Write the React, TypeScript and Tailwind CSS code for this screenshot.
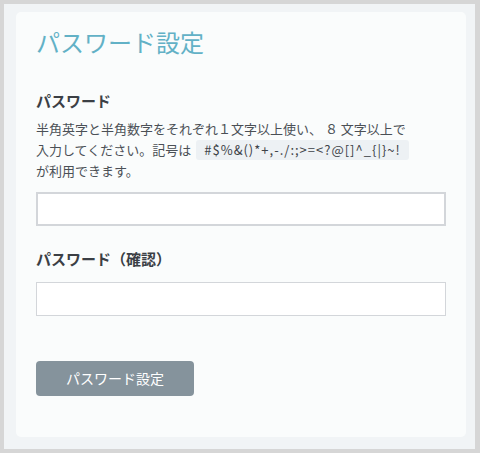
import React from "react";

export default function App() {
  return (
    <div
      className="w-[480px] h-[453px] bg-[#d6d6d6] pl-[4px] pt-[4px] pr-[5px] pb-[4px]"
      style={{ fontFamily: '"Noto Sans CJK JP", "Noto Sans", sans-serif' }}
    >
      <div className="h-full bg-[#f1f4f6] pl-[12px] pt-[8px] pr-[9px] pb-[12px]">
        <div className="h-full rounded-[5px] bg-[#fafcfc] px-[20px] pt-[12px]">
          <h1 className="text-[24px] leading-[36px] text-[#62b1c6] font-normal">パスワード設定</h1>

          <div className="mt-[30px] text-[15px] leading-[22px] font-bold text-[#3b3f45]">パスワード</div>
          <p className="mt-[6px] text-[13px] leading-[21px] text-[#4b5056]">
            半角英字と半角数字をそれぞれ１文字以上使い、 ８ 文字以上で
            <br />
            入力してください。記号は
            <span className="inline-block ml-[5px] px-[8px] rounded-[3px] bg-[#edf1f4] leading-[20px] tracking-[1px] text-[#3e4348]">
              #$%&amp;()*+,-./:;&gt;=&lt;?@[]^_{"{"}|{"}"}~!
            </span>
            <br />
            が利用できます。
          </p>
          <input
            type="password"
            className="mt-[11px] block w-[410px] h-[34px] bg-white border-2 border-[#d3d6da] outline-none"
          />

          <div className="mt-[22px] text-[15px] leading-[22px] font-bold text-[#3b3f45]">パスワード（確認）</div>
          <input
            type="password"
            className="mt-[12px] block w-[410px] h-[34px] bg-white border border-[#d3d6da] outline-none"
          />

          <button className="mt-[45px] block w-[158px] h-[35px] rounded-[4px] bg-[#85939c] text-white text-[14px]">
            パスワード設定
          </button>
        </div>
      </div>
    </div>
  );
}
